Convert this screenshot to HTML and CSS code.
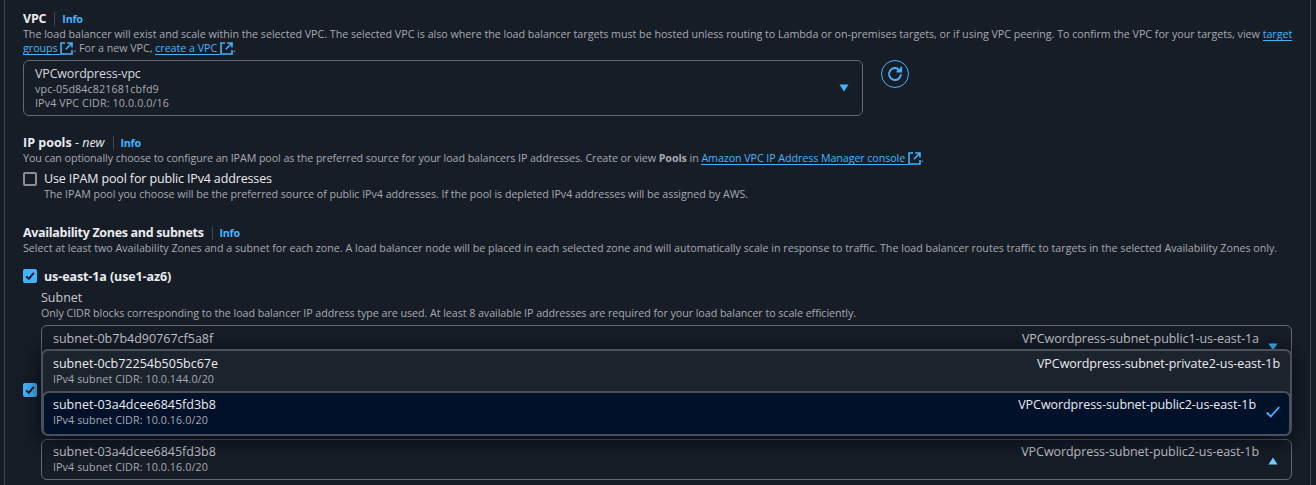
FILE: index.html
```
<!DOCTYPE html>
<html lang="en">
<head>
<meta charset="utf-8">
<title>Create load balancer - Network mapping</title>
<link rel="stylesheet" href="styles.css">
</head>
<body>
<svg width="0" height="0" class="defs" aria-hidden="true">
  <symbol id="external" viewBox="0 0 13 13"><path d="M5 1H1v11h11V8M7.200 1H12v4.600M11.800 1.200L5.800 7.200" fill="none" stroke="currentColor" stroke-width="1.600"/></symbol>
  <symbol id="check" viewBox="0 0 14 14"><path d="M3.200 7.300l2.600 2.600 5-6" fill="none" stroke="currentColor" stroke-width="1.800"/></symbol>
</svg>
<main class="panel">
  <section class="vpc">
    <h2 class="title">VPC<a class="info">Info</a></h2>
    <div class="desc t1">The load balancer will exist and scale within the selected VPC. The selected VPC is also where the load balancer targets must be hosted unless routing to Lambda or on-premises targets, or if using VPC peering. To confirm the VPC for your targets, view <a class="link">target</a></div>
    <div class="desc t2"><a class="link">groups&nbsp;</a><svg class="ext"><use href="#external"/></svg>. For a new VPC, <a class="link">create a VPC&nbsp;</a><svg class="ext"><use href="#external"/></svg>.</div>
    <div class="vpc-row">
      <div class="select vpc-select">
        <div class="lines">
          <div class="name">VPCwordpress-vpc</div>
          <div class="meta">vpc-05d84c821681cbfd9</div>
          <div class="meta">IPv4 VPC CIDR: 10.0.0.0/16</div>
        </div>
        <svg class="caret" viewBox="0 0 10 8"><path d="M.5.500h9L5 7.500z" fill="currentColor"/></svg>
      </div>
      <button class="refresh" aria-label="Refresh"><svg viewBox="0 0 16 16"><path d="M14 8.200A6 6 0 1 1 12.300 3.800L13.800 5.200M14.200.8v4.700H9.500" fill="none" stroke="currentColor" stroke-width="1.900"/></svg></button>
    </div>
  </section>

  <section class="pools">
    <h2 class="title ip">IP pools<span class="new">&nbsp;- <i>new</i></span><a class="info">Info</a></h2>
    <div class="desc t3">You can optionally choose to configure an IPAM pool as the preferred source for your load balancers IP addresses. Create or view <b>Pools</b> in <a class="link">Amazon VPC IP Address Manager console&nbsp;</a><svg class="ext"><use href="#external"/></svg>.</div>
    <div class="check-row ipam"><span class="box"></span><span class="label">Use IPAM pool for public IPv4 addresses</span></div>
    <div class="desc t4">The IPAM pool you choose will be the preferred source of public IPv4 addresses. If the pool is depleted IPv4 addresses will be assigned by AWS.</div>
  </section>

  <section class="zones">
    <h2 class="title az">Availability Zones and subnets<a class="info">Info</a></h2>
    <div class="desc t5">Select at least two Availability Zones and a subnet for each zone. A load balancer node will be placed in each selected zone and will automatically scale in response to traffic. The load balancer routes traffic to targets in the selected Availability Zones only.</div>
    <div class="check-row zone"><span class="box on"><svg><use href="#check"/></svg></span><b class="zone-name">us-east-1a (use1-az6)</b></div>
    <div class="subnet">
      <div class="subnet-label">Subnet</div>
      <div class="desc t6">Only CIDR blocks corresponding to the load balancer IP address type are used. At least 8 available IP addresses are required for your load balancer to scale efficiently.</div>
      <div class="select subnet-select">
        <div class="lines"><div class="name">subnet-0b7b4d90767cf5a8f</div></div>
        <div class="tag">VPCwordpress-subnet-public1-us-east-1a</div>
        <svg class="caret" viewBox="0 0 10 8"><path d="M.5.500h9L5 7.500z" fill="currentColor"/></svg>
      </div>
    </div>
    <div class="check-row second"><span class="box on"><svg><use href="#check"/></svg></span></div>
    <div class="select subnet-select open">
      <div class="lines"><div class="name">subnet-03a4dcee6845fd3b8</div><div class="meta">IPv4 subnet CIDR: 10.0.16.0/20</div></div>
      <div class="tag">VPCwordpress-subnet-public2-us-east-1b</div>
      <svg class="caret" viewBox="0 0 10 8"><path d="M.5 7.500h9L5 .5z" fill="currentColor"/></svg>
    </div>
    <div class="menu">
      <div class="option">
        <div class="lines"><div class="name">subnet-0cb72254b505bc67e</div><div class="meta">IPv4 subnet CIDR: 10.0.144.0/20</div></div>
        <div class="tag">VPCwordpress-subnet-private2-us-east-1b</div>
      </div>
      <div class="option selected">
        <div class="lines"><div class="name">subnet-03a4dcee6845fd3b8</div><div class="meta">IPv4 subnet CIDR: 10.0.16.0/20</div></div>
        <div class="tag">VPCwordpress-subnet-public2-us-east-1b</div>
        <svg class="tick" viewBox="0 0 14 12"><path d="M.8 6.500l4 4L13.200 1" fill="none" stroke="currentColor" stroke-width="1.800"/></svg>
      </div>
    </div>
  </section>
</main>
</body>
</html>
```
FILE: styles.css
```
* { box-sizing: border-box; }
body { margin: 0; height: 485px; overflow: hidden; background: #161d26; font-family: "Open Sans", "Noto Sans", sans-serif; color: #ebebf0; }
.defs { position: absolute; }
.panel { position: relative; width: 1307px; height: 485px; margin-left: 4px; padding: 11px 18px 0; border: solid #424650; border-width: 0 1px; overflow: hidden; white-space: nowrap; }
.title { display: flex; align-items: center; height: 16px; margin: 0; font-size: 12.5px; line-height: 16px; font-weight: 700; letter-spacing: -.2px; }
.ip { letter-spacing: 0; }
.az { letter-spacing: -.32px; }
.new { font-weight: 400; }
.info { height: 14px; margin-left: 8px; padding-left: 7px; border-left: 1px solid #424650; color: #42b4ff; font-size: 10.7px; line-height: 14px; letter-spacing: -.25px; }
.desc { height: 14px; color: #a9a9b2; font-size: 10.7px; line-height: 14px; }
.link { color: #42b4ff; border-bottom: 1px solid #42b4ff; display: inline-block; height: 14px; line-height: 14px; vertical-align: top; }
.ext { width: 13px; height: 13px; color: #42b4ff; vertical-align: -3px; margin-left: 0; }
.t1 { letter-spacing: -.015px; }
.t2 { letter-spacing: -.02px; }
.t3 { letter-spacing: -.07px; }
.t4 { letter-spacing: -.035px; margin: 1px 0 0 21px; }
.t5 { letter-spacing: .002px; }
.t6 { letter-spacing: -.045px; }
.vpc-row { display: flex; align-items: flex-start; gap: 18px; margin-top: 5px; }
.select { display: flex; border: 1px solid #656871; border-radius: 6px; background: #161d26; }
.vpc-select { width: 840px; height: 56px; padding: 5px 13px 0 11px; }
.lines { flex: 1; }
.name { height: 16px; font-size: 12.5px; line-height: 16px; color: #d6d6dd; }
.meta { height: 14px; font-size: 10.7px; line-height: 14px; color: #a9a9b2; letter-spacing: .1px; }
.vpc-select .name { letter-spacing: -.17px; }
.vpc-select .meta { letter-spacing: .13px; }
.caret { width: 10px; height: 8px; color: #42b4ff; }
.vpc-select .caret { margin-top: 18px; }
.refresh { display: grid; place-items: center; width: 28px; height: 28px; padding: 0; border: 1px solid #42b4ff; border-radius: 50%; background: none; color: #42b4ff; }
.refresh svg { width: 16px; height: 16px; }
.pools { margin-top: 19px; }
.check-row { display: flex; align-items: center; height: 16px; gap: 7px; }
.box { width: 14px; height: 14px; border: 2px solid #8c8c94; border-radius: 2px; }
.ipam .box { margin-top: 2px; }
.box.on { border: 0; background: #42b4ff; color: #0f141a; }
.box svg { display: block; width: 14px; height: 14px; }
.ipam { margin-top: 5px; }
.label { font-size: 12.5px; letter-spacing: -.14px; }
.zones { margin-top: 24px; }
.zone { margin-top: 13px; }
.zone-name { font-size: 12.5px; letter-spacing: -.1px; }
.subnet { margin: 6px 0 0 18px; }
.subnet-label { height: 16px; font-size: 12.5px; line-height: 16px; color: #c6c6cd; }
.subnet-select { width: 1251px; height: 41px; padding: 4px 13px 0 11px; }
.subnet .subnet-select { height: 56px; margin-top: 5px; padding-top: 5px; }
.subnet-select .name, .subnet-select .tag { color: #c6c6cd; }
.subnet-select .caret { margin: 12px 0 0 9px; }
.tag { font-size: 12.5px; line-height: 16px; letter-spacing: -.065px; }
.second { margin-top: 1px; }
.open { margin: 41px 0 0 18px; }
.open .caret { color: #75cfff; margin-top: 13px; }
.menu { position: absolute; left: 36px; top: 349px; width: 1251px; height: 87px; border: 2px solid #4a4f5a; border-radius: 7px; background: #1b232d; box-shadow: 0 4px 20px 1px rgba(0, 7, 22, .75); overflow: hidden; }
.option { display: flex; height: 40px; padding: 5px 10px 0; color: #ebebf0; }
.option .name { color: #ebebf0; }
.selected { height: 45px; margin: 0 -1px; padding: 4px 9px 0 9px; border: 2px solid #4a4f5a; border-bottom-width: 1px; border-radius: 7px; background: #001129; }
.tick { width: 14px; height: 12px; margin: 9px 0 0 10px; color: #42b4ff; }
```
